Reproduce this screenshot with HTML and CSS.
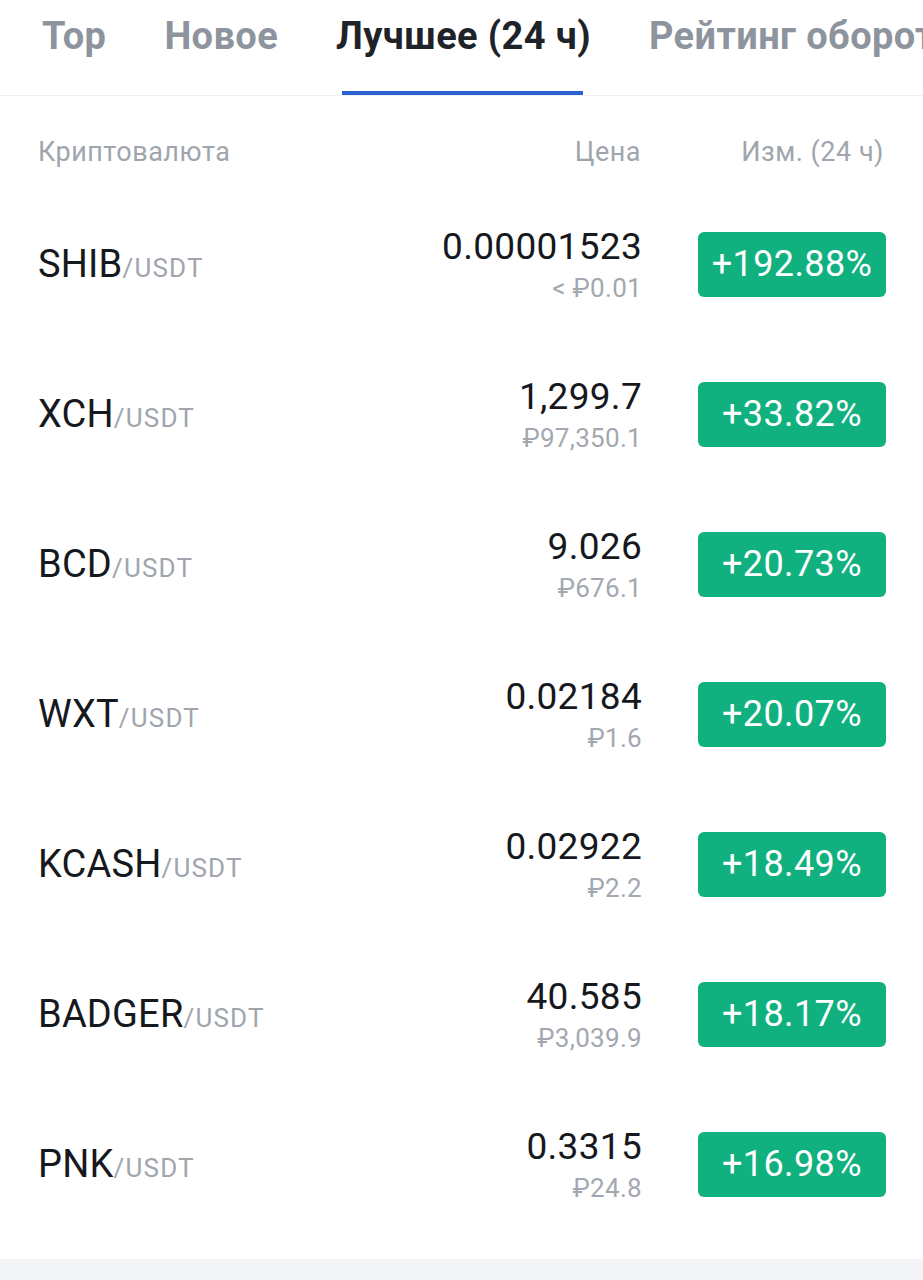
FILE: index.html
```html
<!DOCTYPE html>
<html lang="ru">
<head>
    <meta charset="UTF-8">
    <meta name="viewport" content="width=device-width, initial-scale=1.0">
    <title>Рынки</title>
    <link rel="stylesheet" href="styles.css">
</head>
<body>
    <div class="tabs">
        <div class="tab">Top</div>
        <div class="tab">Новое</div>
        <div class="tab active">Лучшее (24 ч)</div>
        <div class="tab">Рейтинг оборота</div>
    </div>

    <div class="list-head">
        <div class="col-name">Криптовалюта</div>
        <div class="col-price">Цена</div>
        <div class="col-change">Изм. (24 ч)</div>
    </div>

    <div class="list">
        <div class="row">
            <div class="col-name"><span class="sym">SHIB</span><span class="quote">/USDT</span></div>
            <div class="col-price"><div class="price">0.00001523</div><div class="fiat">&lt; ₽0.01</div></div>
            <div class="col-change"><span class="badge">+192.88%</span></div>
        </div>
        <div class="row">
            <div class="col-name"><span class="sym">XCH</span><span class="quote">/USDT</span></div>
            <div class="col-price"><div class="price">1,299.7</div><div class="fiat">₽97,350.1</div></div>
            <div class="col-change"><span class="badge">+33.82%</span></div>
        </div>
        <div class="row">
            <div class="col-name"><span class="sym">BCD</span><span class="quote">/USDT</span></div>
            <div class="col-price"><div class="price">9.026</div><div class="fiat">₽676.1</div></div>
            <div class="col-change"><span class="badge">+20.73%</span></div>
        </div>
        <div class="row">
            <div class="col-name"><span class="sym">WXT</span><span class="quote">/USDT</span></div>
            <div class="col-price"><div class="price">0.02184</div><div class="fiat">₽1.6</div></div>
            <div class="col-change"><span class="badge">+20.07%</span></div>
        </div>
        <div class="row">
            <div class="col-name"><span class="sym">KCASH</span><span class="quote">/USDT</span></div>
            <div class="col-price"><div class="price">0.02922</div><div class="fiat">₽2.2</div></div>
            <div class="col-change"><span class="badge">+18.49%</span></div>
        </div>
        <div class="row">
            <div class="col-name"><span class="sym">BADGER</span><span class="quote">/USDT</span></div>
            <div class="col-price"><div class="price">40.585</div><div class="fiat">₽3,039.9</div></div>
            <div class="col-change"><span class="badge">+18.17%</span></div>
        </div>
        <div class="row">
            <div class="col-name"><span class="sym">PNK</span><span class="quote">/USDT</span></div>
            <div class="col-price"><div class="price">0.3315</div><div class="fiat">₽24.8</div></div>
            <div class="col-change"><span class="badge">+16.98%</span></div>
        </div>
    </div>

    <div class="footer-band"></div>
</body>
</html>
```

FILE: styles.css
```css
body {
    margin: 0;
    font-family: Roboto, "Noto Sans", sans-serif;
    background: #fff;
    color: #1e2329;
    overflow: hidden;
}
.tabs {
    display: flex;
    gap: 58px;
    height: 95px;
    padding-left: 42px;
    border-bottom: 1px solid #eef0f3;
    white-space: nowrap;
    overflow: hidden;
}
.tab {
    position: relative;
    font-size: 38px;
    font-weight: 700;
    color: #8e949e;
    line-height: 72px;
    letter-spacing: 0.4px;
}
.tab.active {
    color: #1e2329;
}
.tab.active::after {
    content: "";
    position: absolute;
    left: 6px;
    right: 8px;
    bottom: 0;
    height: 4px;
    background: #2c5fcf;
}
.list-head,
.row {
    display: flex;
    align-items: center;
    padding: 0 37px 0 38px;
}
.list-head {
    height: 93px;
    font-size: 27px;
    color: #a0a5ad;
    letter-spacing: 0.5px;
    padding-top: 40px;
    box-sizing: border-box;
    align-items: flex-start;
}
.col-name {
    flex: 1;
}
.col-price {
    text-align: right;
    width: 300px;
}
.col-change {
    width: 246px;
    display: flex;
    justify-content: flex-end;
}
.list-head .col-price {
    margin-right: -3px;
}
.list-head .col-change {
    padding-right: 2px;
}
.row {
    height: 150px;
}
.row .col-price {
    padding-top: 8px;
}
.sym {
    font-size: 38px;
    font-weight: 400;
    color: #16181d;
    letter-spacing: 0.2px;
}
.quote {
    font-size: 26px;
    color: #a0a5ad;
    letter-spacing: 1.2px;
}
.price {
    font-size: 37px;
    font-weight: 400;
    line-height: 40px;
    margin-right: -2px;
    color: #16181d;
    letter-spacing: 0.3px;
}
.fiat {
    font-size: 26px;
    color: #a3a8b0;
    line-height: 42px;
    margin-right: -2px;
    letter-spacing: 0.3px;
}
.badge {
    display: flex;
    align-items: center;
    justify-content: center;
    width: 188px;
    height: 65px;
    border-radius: 6px;
    background: #10b07f;
    color: #fff;
    font-size: 36px;
    letter-spacing: 0.4px;
}
.footer-band {
    margin-top: 20px;
    height: 40px;
    background: #f4f5f7;
}
```
